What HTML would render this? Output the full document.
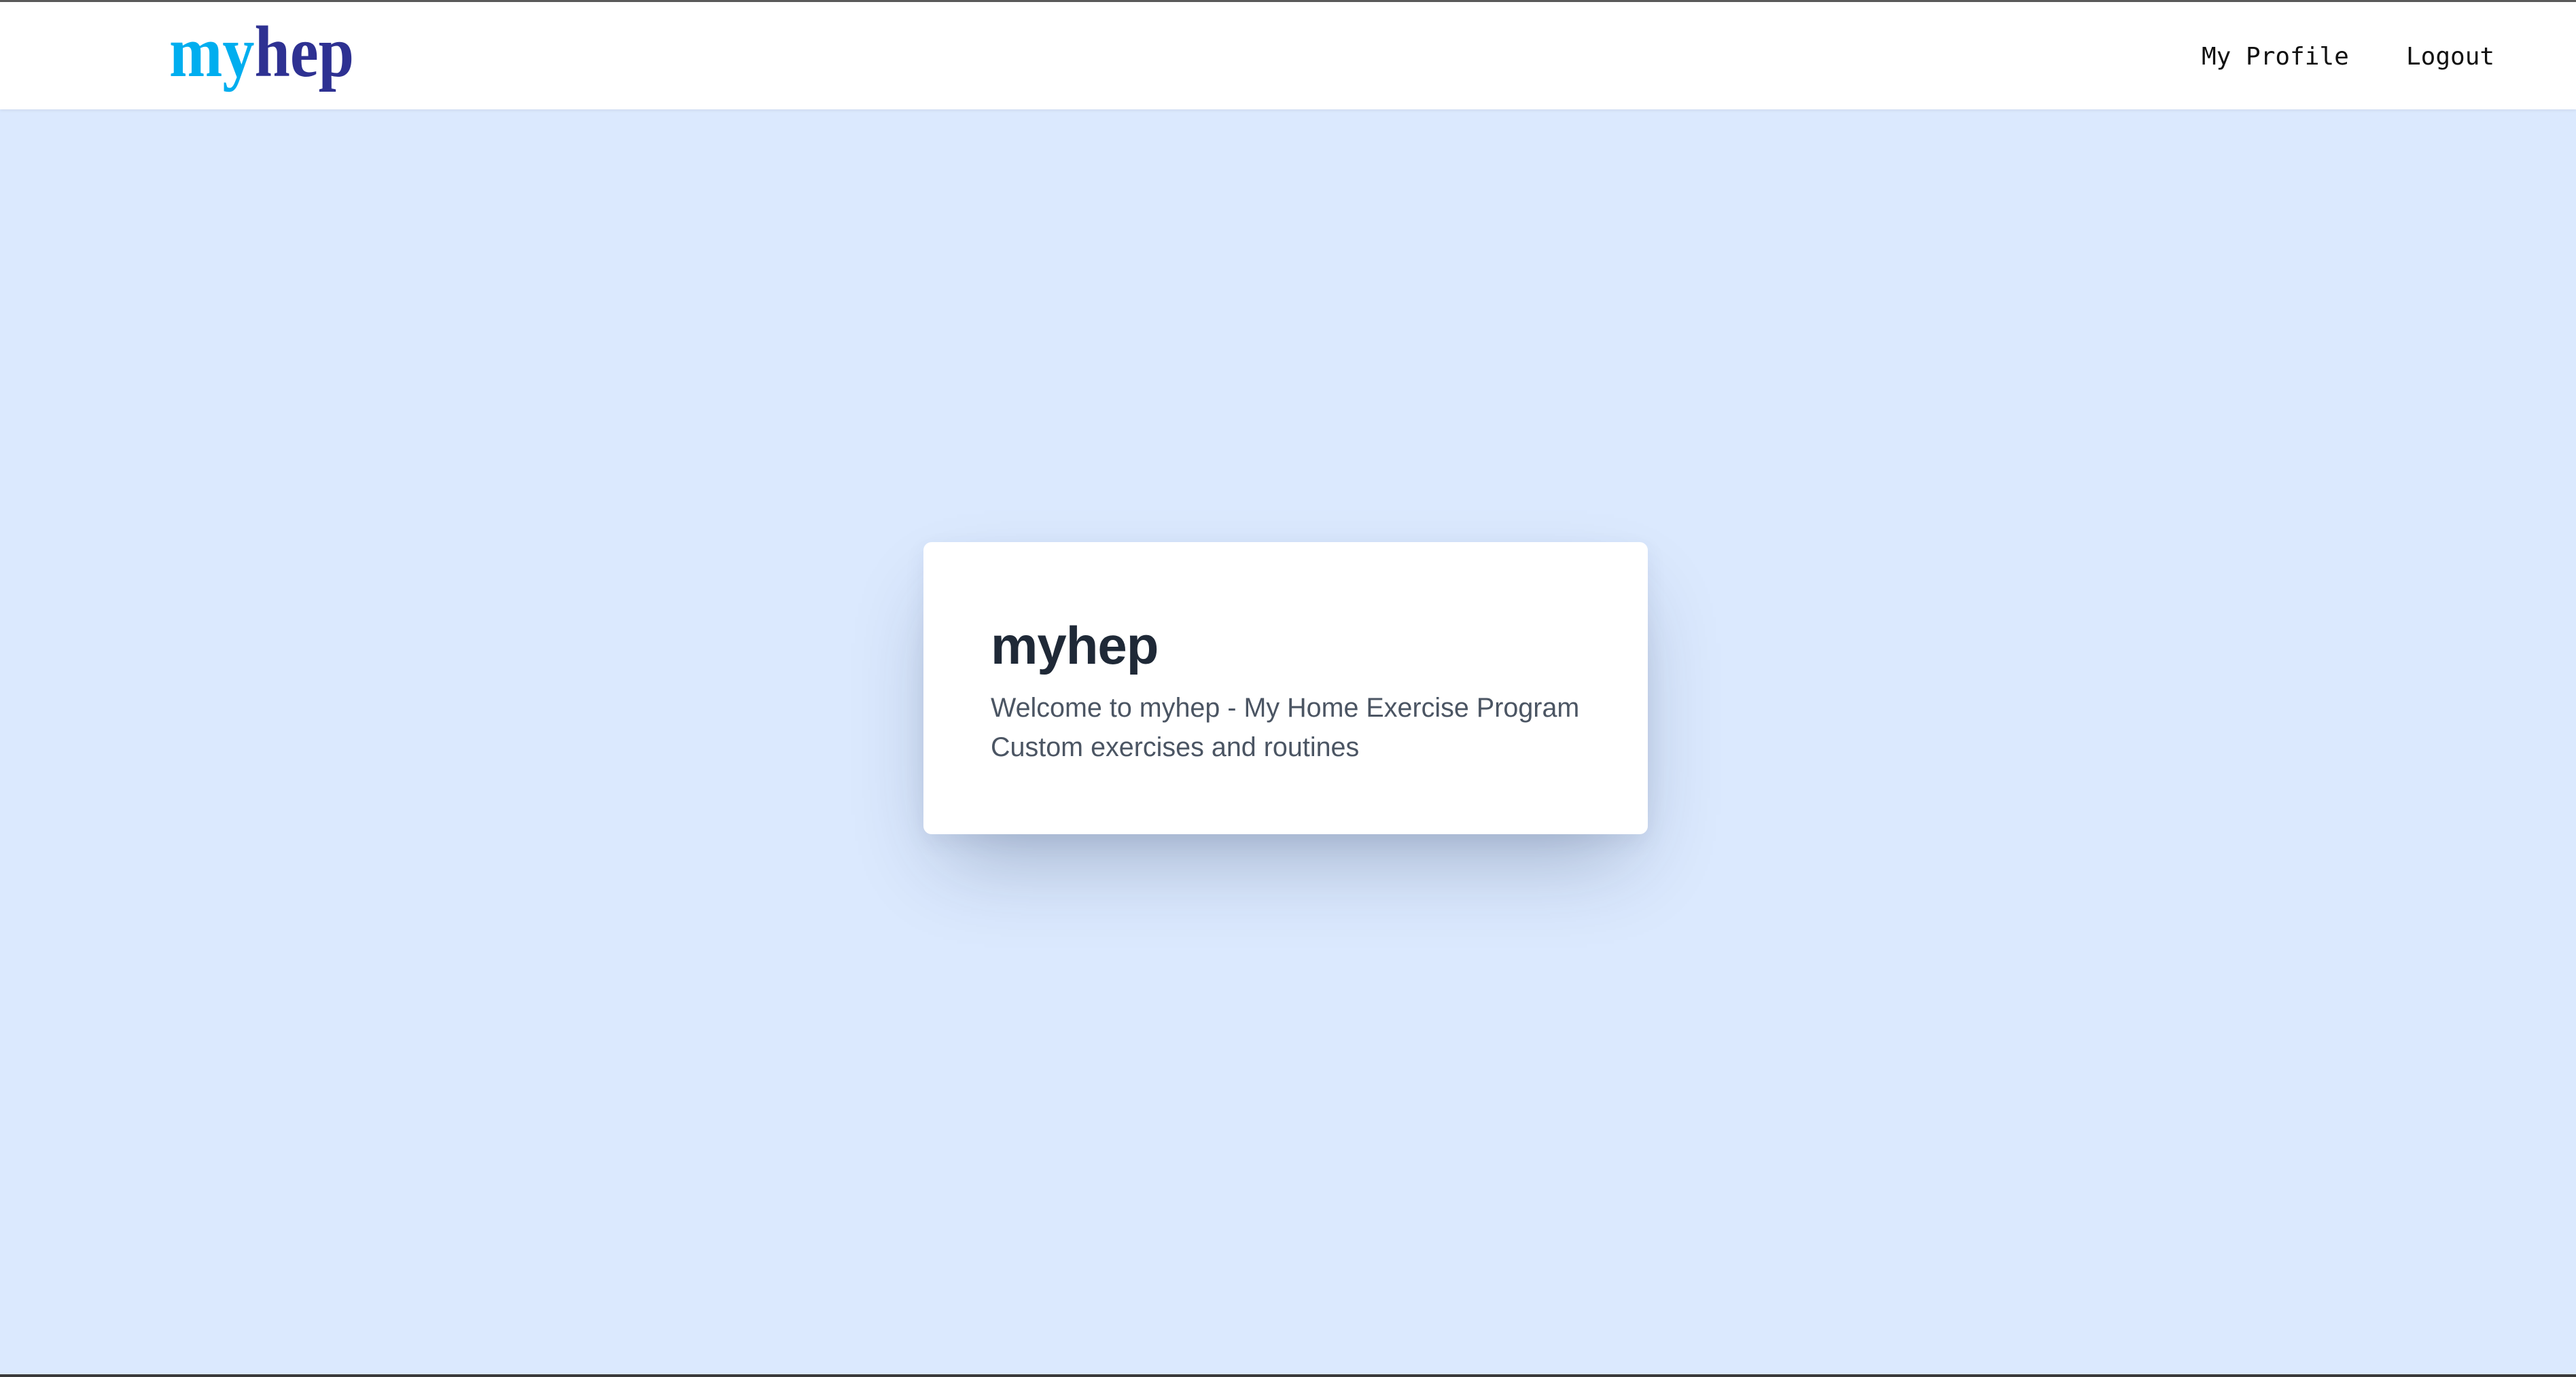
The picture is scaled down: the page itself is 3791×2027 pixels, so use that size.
<!DOCTYPE html>
<html><head><meta charset="utf-8"><style>
html,body{margin:0;padding:0;}
body{width:3791px;height:2027px;background:#dbe9fe;position:relative;overflow:hidden;font-family:"Liberation Sans",sans-serif;}
.topline{position:absolute;left:0;top:0;width:100%;height:3px;background:#5a5a5a;}
.botline{position:absolute;left:0;bottom:0;width:100%;height:4px;background:#3a3a3a;}
header{position:absolute;left:0;top:3px;width:100%;height:158px;background:#fff;box-shadow:0 2px 4px rgba(0,0,0,.06);}
.logo{position:absolute;left:249px;line-height:0;font-family:"Liberation Serif",serif;font-weight:bold;font-size:107px;transform:scaleX(.88);transform-origin:left bottom;white-space:nowrap;}
.logo span{display:inline-block;line-height:0;}
.my{color:#00aeef}.hep{color:#2e3192}
.nav{position:absolute;line-height:0;font-family:"DejaVu Sans Mono","Liberation Mono",monospace;font-size:36px;color:#111;white-space:nowrap;}
.card{position:absolute;left:1359px;top:798px;width:1066px;height:430px;background:#fff;border-radius:12px;box-shadow:0 60px 120px -30px rgba(20,40,80,.3),0 10px 30px rgba(60,80,120,.08);}
.card h1{position:absolute;left:99px;margin:0;font-size:78px;font-weight:bold;color:#1f2937;line-height:0;top:152px;letter-spacing:-1px;}
.card p{position:absolute;left:99px;margin:0;font-size:39.5px;color:#4b5563;line-height:0;white-space:nowrap;}
</style></head><body>
<div class="topline"></div>
<header>
<div class="logo" style="top:74px"><span class="my">my</span><span class="hep">hep</span></div>
<div class="nav" style="left:3240px;top:81px">My Profile</div>
<div class="nav" style="left:3541px;top:81px">Logout</div>
</header>
<div class="card">
<h1>myhep</h1>
<p style="top:244px">Welcome to myhep - My Home Exercise Program</p>
<p style="top:302px">Custom exercises and routines</p>
</div>
<div class="botline"></div>
</body></html>
